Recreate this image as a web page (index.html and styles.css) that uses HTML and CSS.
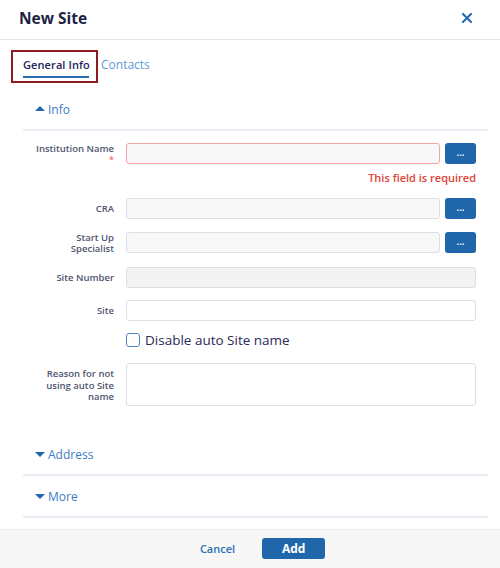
FILE: index.html
```html
<!DOCTYPE html>
<html>
<head>
<meta charset="utf-8">
<link rel="stylesheet" href="styles.css">
</head>
<body>
<div class="dialog">
  <header class="dlg-header">
    <h1 class="dlg-title">New Site</h1>
    <button class="close-btn" aria-label="Close">
      <svg width="10" height="10" viewBox="0 0 10 10"><path d="M1 1L9 9M9 1L1 9" stroke="#2168b4" stroke-width="2" stroke-linecap="square"/></svg>
    </button>
  </header>
  <div class="dlg-body">
    <nav class="tabs">
      <div class="tab-highlight">
        <span class="tab active">General Info</span>
      </div>
      <span class="tab">Contacts</span>
    </nav>
    <section class="section">
      <div class="section-head first"><span class="caret up"></span>Info</div>
      <div class="form">
        <div class="row">
          <label class="lbl">Institution Name<br><span class="req">*</span></label>
          <div class="field">
            <div class="with-btn">
              <input class="input error" type="text">
              <button class="dots">...</button>
            </div>
            <div class="err-msg">This field is required</div>
          </div>
        </div>
        <div class="row">
          <label class="lbl lbl-mid">CRA</label>
          <div class="field">
            <div class="with-btn">
              <input class="input" type="text">
              <button class="dots">...</button>
            </div>
          </div>
        </div>
        <div class="row">
          <label class="lbl">Start Up<br>Specialist</label>
          <div class="field">
            <div class="with-btn">
              <input class="input" type="text">
              <button class="dots">...</button>
            </div>
          </div>
        </div>
        <div class="row row-tight">
          <label class="lbl lbl-mid">Site Number</label>
          <div class="field"><input class="input disabled" type="text"></div>
        </div>
        <div class="row row-tight">
          <label class="lbl lbl-mid">Site</label>
          <div class="field"><input class="input white" type="text"></div>
        </div>
        <div class="row row-check">
          <div class="lbl"></div>
          <div class="field check-field"><span class="checkbox"></span><span class="check-text">Disable auto Site name</span></div>
        </div>
        <div class="row">
          <label class="lbl lbl-area">Reason for not using auto Site name</label>
          <div class="field"><textarea class="textarea"></textarea></div>
        </div>
      </div>
    </section>
    <section class="section">
      <div class="section-head"><span class="caret down"></span>Address</div>
    </section>
    <section class="section">
      <div class="section-head"><span class="caret down"></span>More</div>
    </section>
  </div>
  <footer class="dlg-footer">
    <button class="link-btn">Cancel</button>
    <button class="primary-btn">Add</button>
  </footer>
</div>
</body>
</html>
```

FILE: styles.css
```css
* { box-sizing: border-box; }
html, body { margin: 0; padding: 0; background: #fff; }
body { font-family: "Open Sans", "Noto Sans", sans-serif; width: 500px; height: 568px; overflow: hidden; }
.dialog { display: flex; flex-direction: column; height: 568px; }
.dlg-header {
  height: 40px; display: flex; align-items: center; justify-content: space-between;
  padding: 0 28px 0 19px; border-bottom: 1px solid #e2e6ec; flex: none;
}
.dlg-title { margin: 0; font-size: 15.5px; font-weight: 700; color: #1e1f46; margin-top: -3px; }
.close-btn { border: 0; background: none; padding: 0; width: 10px; height: 10px; display: flex; margin-top: -3px; }
.dlg-body { flex: 1; padding: 0 12px 0 23px; }
.tabs { display: flex; align-items: flex-start; height: 33px; margin-top: 10px; margin-left: -12px; }
.tab-highlight {
  border: 2px solid #8c1c1f; height: 33px; width: 87px; padding-left: 10px; padding-top: 5px;
  display: flex; align-items: flex-start;
}
.tab { font-size: 12px; color: #5d9ad6; line-height: 16px; padding: 7px 0 0 3px; white-space: nowrap; }
.tab.active {
  color: #23245a; font-weight: 600; font-size: 11px; padding: 0 0 3px 0; border-bottom: 2px solid #2a6cb3; width: 66px;
  letter-spacing: 0.1px;
}
.section-head {
  height: 42px; display: flex; align-items: center; font-size: 12px; color: #3b7bc5;
  padding-left: 12px; border-bottom: 2px solid #e8edf3;
}
.section-head.first { height: 48px; padding-top: 7px; }
.caret { width: 0; height: 0; border-left: 5px solid transparent; border-right: 5px solid transparent; margin-right: 3px; }
.caret.up { border-bottom: 5px solid #2467b0; margin-top: -2px; }
.caret.down { border-top: 5px solid #2467b0; }
.form { padding: 12px 12px 28px 0; }
.row { display: flex; align-items: flex-start; margin-bottom: 13px; }
.row.row-tight { margin-bottom: 12px; }
.row:last-child { margin-bottom: 0; }
.lbl {
  width: 91px; flex: none; text-align: right; font-size: 9.5px; font-weight: 600; color: #4f5670;
  line-height: 11px; margin-right: 12px;
}
.lbl-mid { padding-top: 5px; }
.lbl-area { padding-top: 5px; line-height: 11.5px; }
.req { color: #f26a7b; font-size: 9px; }
.field { flex: 1; min-width: 0; }
.with-btn { display: flex; gap: 5px; }
.input {
  display: block; width: 100%; height: 21px; border: 1px solid #dcdfe4; border-radius: 3px;
  background: #f8f8f8; font: inherit; padding: 0 6px; outline: none;
}
.input.error { border-color: #f5a3ab; }
.input.disabled { background: #f3f3f3; }
.input.white { background: #fff; }
.dots {
  flex: none; width: 31px; height: 21px; border: 0; border-radius: 3px; background: #1f66ab;
  color: #fff; font: 600 10px "Open Sans", sans-serif; line-height: 14px; padding: 0 0 4px;
}
.err-msg { text-align: right; font-size: 11px; font-weight: 600; color: #dd4336; margin-top: 6px; line-height: 16px; margin-bottom: -1px; }
.row-check { margin-bottom: 16px; }
.check-field { display: flex; align-items: center; height: 14px; }
.checkbox { width: 14px; height: 14px; border: 1.5px solid #4a87c9; border-radius: 3px; margin-right: 5px; background: #fff; flex: none; }
.check-text { font-size: 13.5px; color: #2b2a56; white-space: nowrap; }
.textarea {
  display: block; width: 100%; height: 43px; resize: none; border: 1px solid #dcdfe4; border-radius: 3px;
  background: #fff; outline: none;
}
.dlg-footer {
  flex: none; height: 39px; background: #f7f7f7; border-top: 1px solid #ececec;
  display: flex; align-items: flex-start; justify-content: center; gap: 27px; padding: 8px 0 0 25px; margin-top: 11px;
}
.link-btn { border: 0; background: none; font: 600 11px "Open Sans", sans-serif; color: #2f6fb1; padding: 0; height: 21px; line-height: 20px; }
.primary-btn {
  border: 0; width: 63px; height: 21px; border-radius: 3px; background: #1f66ab; color: #fff;
  font: 700 12px "Open Sans", sans-serif; padding: 0;
}
```
